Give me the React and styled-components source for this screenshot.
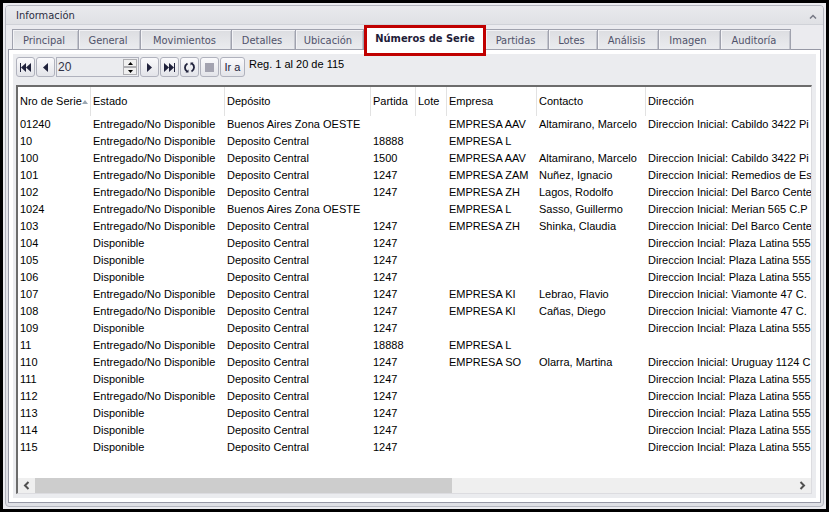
import React, { useState } from "react";
import styled, { createGlobalStyle } from "styled-components";

const GlobalStyle = createGlobalStyle`
  * { box-sizing: border-box; }
  body { margin: 0; background: #ebebef; }
  button, input { font: inherit; color: inherit; margin: 0; }
`;

const uiFont = `"DejaVu Sans Condensed", "Noto Sans", sans-serif`;
const gridFont = `"Liberation Sans", Arial, sans-serif`;

const Window = styled.div`
  display: flex;
  flex-direction: column;
  min-height: 100vh;
  padding: 2px;
  border: 3px solid #000;
  background: #ebebef;
  font: 11px/14px ${uiFont};
  color: #2b2d42;
`;

const Group = styled.section`
  flex: 1;
  display: flex;
  flex-direction: column;
  min-width: 0;
  padding: 0 2px 3px;
  border: 1px solid #b4b6bf;
  border-radius: 4px;
  background: linear-gradient(#ebebef, #dfe0e5);
`;

const GroupHeader = styled.header`
  display: flex;
  align-items: center;
  justify-content: space-between;
  height: 19px;
  margin: 0 -2px;
  padding: 2px 4px 0 10px;
  border-bottom: 1px solid #d0d2d8;
  border-radius: 3px 3px 0 0;
  background: linear-gradient(#e9eaed, #e0e1e5);
`;

const GroupTitle = styled.h1`
  margin: 0;
  font-size: 11px;
  font-weight: 400;
`;

const CollapseButton = styled.button`
  display: flex;
  padding: 2px;
  border: 0;
  background: none;
  color: #777985;
`;

const TabBar = styled.div`
  position: relative;
  z-index: 1;
  display: flex;
  height: 24px;
  margin: 0 -2px;
  padding: 4px 6px 0;
  background: #ebebef;
`;

const Tab = styled.button`
  flex: none;
  width: ${(p) => p.$width}px;
  height: 21px;
  padding: 2px 3px 0 0;
  border: 1px solid #a0a2ae;
  border-left-width: ${(p) => (p.$first ? 1 : 0)}px;
  background: linear-gradient(#dcdde1, #ebecef);
  box-shadow: inset 1px 1px 0 #f3f3f6, inset -1px 0 0 #c4c6ce;
  color: #50526a;
  white-space: nowrap;
`;

const ActiveTab = styled(Tab)`
  height: 31px;
  margin-top: -4px;
  padding: 0 0 3px;
  border: 3px solid #c00000;
  background: #fff;
  box-shadow: none;
  color: #1e2038;
  font-weight: 700;
`;

const TabPage = styled.div`
  flex: 1;
  display: flex;
  flex-direction: column;
  min-width: 0;
  padding: 4px;
  border: 1px solid #9698a5;
  background: #fff;
`;

const Content = styled.div`
  flex: 1;
  display: flex;
  flex-direction: column;
  min-width: 0;
  padding: 3px 4px 4px 3px;
  background: #ebecef;
`;

const Toolbar = styled.div`
  display: flex;
  gap: 1px;
  height: 20px;
  margin-bottom: 8px;
  font: 11px/14px ${gridFont};
`;

const ToolButton = styled.button`
  display: flex;
  align-items: center;
  justify-content: center;
  width: ${(p) => p.$width || 19}px;
  height: 20px;
  padding: 0;
  border: 1px solid #b0b2bd;
  border-radius: 3px;
  background: linear-gradient(#fafafc, #e3e4e9);
  color: #20223c;
`;

const NumberBox = styled.div`
  display: flex;
  width: 83px;
  height: 20px;
  padding: 1px;
  border: 1px solid #b0b2bd;
  background: #ebecef;
`;

const NumberInput = styled.input`
  flex: 1;
  min-width: 0;
  height: 15px;
  padding: 0;
  border: 0;
  outline: 0;
  background: transparent;
  color: #303247;
  font-size: 12px;
`;

const Spinner = styled.div`
  display: flex;
  flex-direction: column;
  width: 14px;
`;

const SpinButton = styled.button`
  flex: 1;
  display: flex;
  align-items: center;
  justify-content: center;
  padding: 0;
  border: 1px solid #aeaeb2;
  background: #f0f0f0;
  color: #000;
`;

const RecordInfo = styled.output`
  padding-left: 3px;
  color: #000;
`;

const GridFrame = styled.div`
  flex: 1;
  display: flex;
  flex-direction: column;
  min-width: 0;
  overflow: hidden;
  border: solid;
  border-width: 2px 1px 1px 2px;
  border-color: #6c6c6c #dcdce0 #dcdce0 #6c6c6c;
  background: #fff;
`;

const TableArea = styled.div`
  flex: 1;
  overflow: hidden;
  padding-bottom: 20px;
`;

const Table = styled.table`
  width: 100%;
  border-collapse: separate;
  border-spacing: 0;
  table-layout: fixed;
  font: 11px/17px ${gridFont};
  color: #000;
  white-space: nowrap;
`;

const Column = styled.col`
  width: ${(p) => (p.$width ? `${p.$width}px` : "auto")};
`;

const HeadCell = styled.th`
  height: 29px;
  padding: 0 0 0 2px;
  border-right: 1px solid #e2e2e2;
  font-weight: 400;
  text-align: left;
  overflow: hidden;

  &:last-child { border-right: 0; }
`;

const HeadLabel = styled.span`
  display: flex;
  align-items: center;
`;

const Cell = styled.td`
  height: 17px;
  padding: 0 0 0 2px;
  overflow: hidden;
`;

const ScrollBar = styled.div`
  display: flex;
  height: 15px;
  background: #efefef;
`;

const ScrollArrow = styled.button`
  display: flex;
  align-items: center;
  justify-content: center;
  width: 17px;
  padding: 0;
  border: 0;
  background: #efefef;
  color: #505050;
`;

const ScrollTrack = styled.div`
  flex: 1;
`;

const ScrollThumb = styled.div`
  width: 55%;
  height: 100%;
  background: #cdcdcd;
`;

const paths = {
  first: "M1 2h1v9H1zM7 2v9L2 6.500zM12 2v9L7 6.500z",
  prev: "M9 2v9L4 6.500z",
  next: "M4 2v9l5-4.500z",
  last: "M1 2v9l5-4.500zM6 2v9l5-4.500zM11 2h1v9h-1z",
};

const Glyph = ({ name }) => (
  <svg width="13" height="13" viewBox="0 0 13 13" fill="currentColor" aria-hidden="true">
    <path d={paths[name]} />
  </svg>
);

const RefreshGlyph = () => (
  <svg width="13" height="13" viewBox="0 0 13 13" aria-hidden="true">
    <path d="M4.500 2.500C1.200 4.500 1.200 8.500 4 10.500M8.500 10.500c3.300-2 3.300-6 .5-8" fill="none" stroke="currentColor" strokeWidth="1.800" />
    <path d="M2.500 11.500h3V8.500zM10.500 1.500h-3v3z" fill="currentColor" />
  </svg>
);

const StopGlyph = () => (
  <svg width="9" height="9" viewBox="0 0 9 9" aria-hidden="true">
    <path d="M0 0h9v9H0z" fill="#a3a3b0" />
  </svg>
);

const SpinGlyph = ({ down }) => (
  <svg width="5" height="3" viewBox="0 0 5 3" fill="currentColor" aria-hidden="true">
    <path d={down ? "M0 0h5L2.500 3z" : "M0 3h5L2.500 0z"} />
  </svg>
);

const Chevron = ({ d, width, height, stroke }) => (
  <svg width={width} height={height} viewBox={`0 0 ${width} ${height}`} fill="none" stroke="currentColor" strokeWidth={stroke} aria-hidden="true">
    <path d={d} />
  </svg>
);

const SortGlyph = () => (
  <svg width="6" height="4" viewBox="0 0 6 4" aria-hidden="true">
    <path d="M0 4h6L3 0z" fill="#9aa6b2" />
  </svg>
);

const tabs = [
  ["Principal", 67],
  ["General", 62],
  ["Movimientos", 91],
  ["Detalles", 64],
  ["Ubicación", 68],
  ["Números de Serie", 122],
  ["Partidas", 63],
  ["Lotes", 49],
  ["Análisis", 61],
  ["Imagen", 62],
  ["Auditoría", 70],
];

const columns = [
  ["Nro de Serie", 73],
  ["Estado", 134],
  ["Depósito", 146],
  ["Partida", 45],
  ["Lote", 31],
  ["Empresa", 90],
  ["Contacto", 109],
  ["Dirección", 0],
];

const out = "Entregado/No Disponible";
const free = "Disponible";
const central = "Deposito Central";
const west = "Buenos Aires Zona OESTE";
const plaza = "Direccion Incial: Plaza Latina 555";

const rows = [
  ["01240", out, west, "", "", "EMPRESA AAV", "Altamirano, Marcelo", "Direccion Inicial: Cabildo 3422 Pi"],
  ["10", out, central, "18888", "", "EMPRESA L", "", ""],
  ["100", out, central, "1500", "", "EMPRESA AAV", "Altamirano, Marcelo", "Direccion Inicial: Cabildo 3422 Pi"],
  ["101", out, central, "1247", "", "EMPRESA ZAM", "Nuñez, Ignacio", "Direccion Inicial: Remedios de Es"],
  ["102", out, central, "1247", "", "EMPRESA ZH", "Lagos, Rodolfo", "Direccion Inicial: Del Barco Cente"],
  ["1024", out, west, "", "", "EMPRESA L", "Sasso, Guillermo", "Direccion Inicial: Merian 565 C.P"],
  ["103", out, central, "1247", "", "EMPRESA ZH", "Shinka, Claudia", "Direccion Inicial: Del Barco Cente"],
  ["104", free, central, "1247", "", "", "", plaza],
  ["105", free, central, "1247", "", "", "", plaza],
  ["106", free, central, "1247", "", "", "", plaza],
  ["107", out, central, "1247", "", "EMPRESA KI", "Lebrao, Flavio", "Direccion Inicial: Viamonte 47 C."],
  ["108", out, central, "1247", "", "EMPRESA KI", "Cañas, Diego", "Direccion Inicial: Viamonte 47 C."],
  ["109", free, central, "1247", "", "", "", plaza],
  ["11", out, central, "18888", "", "EMPRESA L", "", ""],
  ["110", out, central, "1247", "", "EMPRESA SO", "Olarra, Martina", "Direccion Inicial: Uruguay 1124 C"],
  ["111", free, central, "1247", "", "", "", plaza],
  ["112", out, central, "1247", "", "", "", plaza],
  ["113", free, central, "1247", "", "", "", plaza],
  ["114", free, central, "1247", "", "", "", plaza],
  ["115", free, central, "1247", "", "", "", plaza],
];

export default function App() {
  const [size, setSize] = useState(20);
  return (
    <>
      <GlobalStyle />
      <Window>
        <Group aria-labelledby="group-title">
          <GroupHeader>
            <GroupTitle id="group-title">Información</GroupTitle>
            <CollapseButton type="button" aria-label="Contraer">
              <Chevron width={8} height={5} stroke={1.5} d="M1 4.500L4 1.500l3 3" />
            </CollapseButton>
          </GroupHeader>
          <TabBar role="tablist">
            {tabs.map(([label, width], i) => {
              const active = label === "Números de Serie";
              const Part = active ? ActiveTab : Tab;
              return (
                <Part key={label} type="button" role="tab" aria-selected={active} $width={width} $first={i === 0}>
                  {label}
                </Part>
              );
            })}
          </TabBar>
          <TabPage role="tabpanel" aria-label="Números de Serie">
            <Content>
              <Toolbar>
                <ToolButton type="button" aria-label="Primero"><Glyph name="first" /></ToolButton>
                <ToolButton type="button" aria-label="Anterior"><Glyph name="prev" /></ToolButton>
                <NumberBox>
                  <NumberInput
                    type="text"
                    inputMode="numeric"
                    aria-label="Registros por página"
                    value={size}
                    onChange={(e) => setSize(Number(e.target.value) || 0)}
                  />
                  <Spinner>
                    <SpinButton type="button" aria-label="Aumentar" onClick={() => setSize(size + 1)}><SpinGlyph /></SpinButton>
                    <SpinButton type="button" aria-label="Disminuir" onClick={() => setSize(Math.max(1, size - 1))}><SpinGlyph down /></SpinButton>
                  </Spinner>
                </NumberBox>
                <ToolButton type="button" aria-label="Siguiente"><Glyph name="next" /></ToolButton>
                <ToolButton type="button" aria-label="Último"><Glyph name="last" /></ToolButton>
                <ToolButton type="button" aria-label="Actualizar"><RefreshGlyph /></ToolButton>
                <ToolButton type="button" aria-label="Detener" disabled><StopGlyph /></ToolButton>
                <ToolButton type="button" $width={25}>Ir a</ToolButton>
                <RecordInfo>Reg. 1 al 20 de 115</RecordInfo>
              </Toolbar>
              <GridFrame>
                <TableArea>
                  <Table>
                    <colgroup>
                      {columns.map(([label, width]) => <Column key={label} $width={width} />)}
                    </colgroup>
                    <thead>
                      <tr>
                        {columns.map(([label], i) => (
                          <HeadCell key={label} scope="col">
                            <HeadLabel>{label}{i === 0 && <SortGlyph />}</HeadLabel>
                          </HeadCell>
                        ))}
                      </tr>
                    </thead>
                    <tbody>
                      {rows.map((row) => (
                        <tr key={row[0]}>
                          {row.map((value, i) => <Cell key={columns[i][0]}>{value}</Cell>)}
                        </tr>
                      ))}
                    </tbody>
                  </Table>
                </TableArea>
                <ScrollBar>
                  <ScrollArrow type="button" aria-label="Desplazar a la izquierda">
                    <Chevron width={7} height={9} stroke={2} d="M5.500 1L2 4.500 5.500 8" />
                  </ScrollArrow>
                  <ScrollTrack><ScrollThumb /></ScrollTrack>
                  <ScrollArrow type="button" aria-label="Desplazar a la derecha">
                    <Chevron width={7} height={9} stroke={2} d="M1.500 1L5 4.500 1.500 8" />
                  </ScrollArrow>
                </ScrollBar>
              </GridFrame>
            </Content>
          </TabPage>
        </Group>
      </Window>
    </>
  );
}
